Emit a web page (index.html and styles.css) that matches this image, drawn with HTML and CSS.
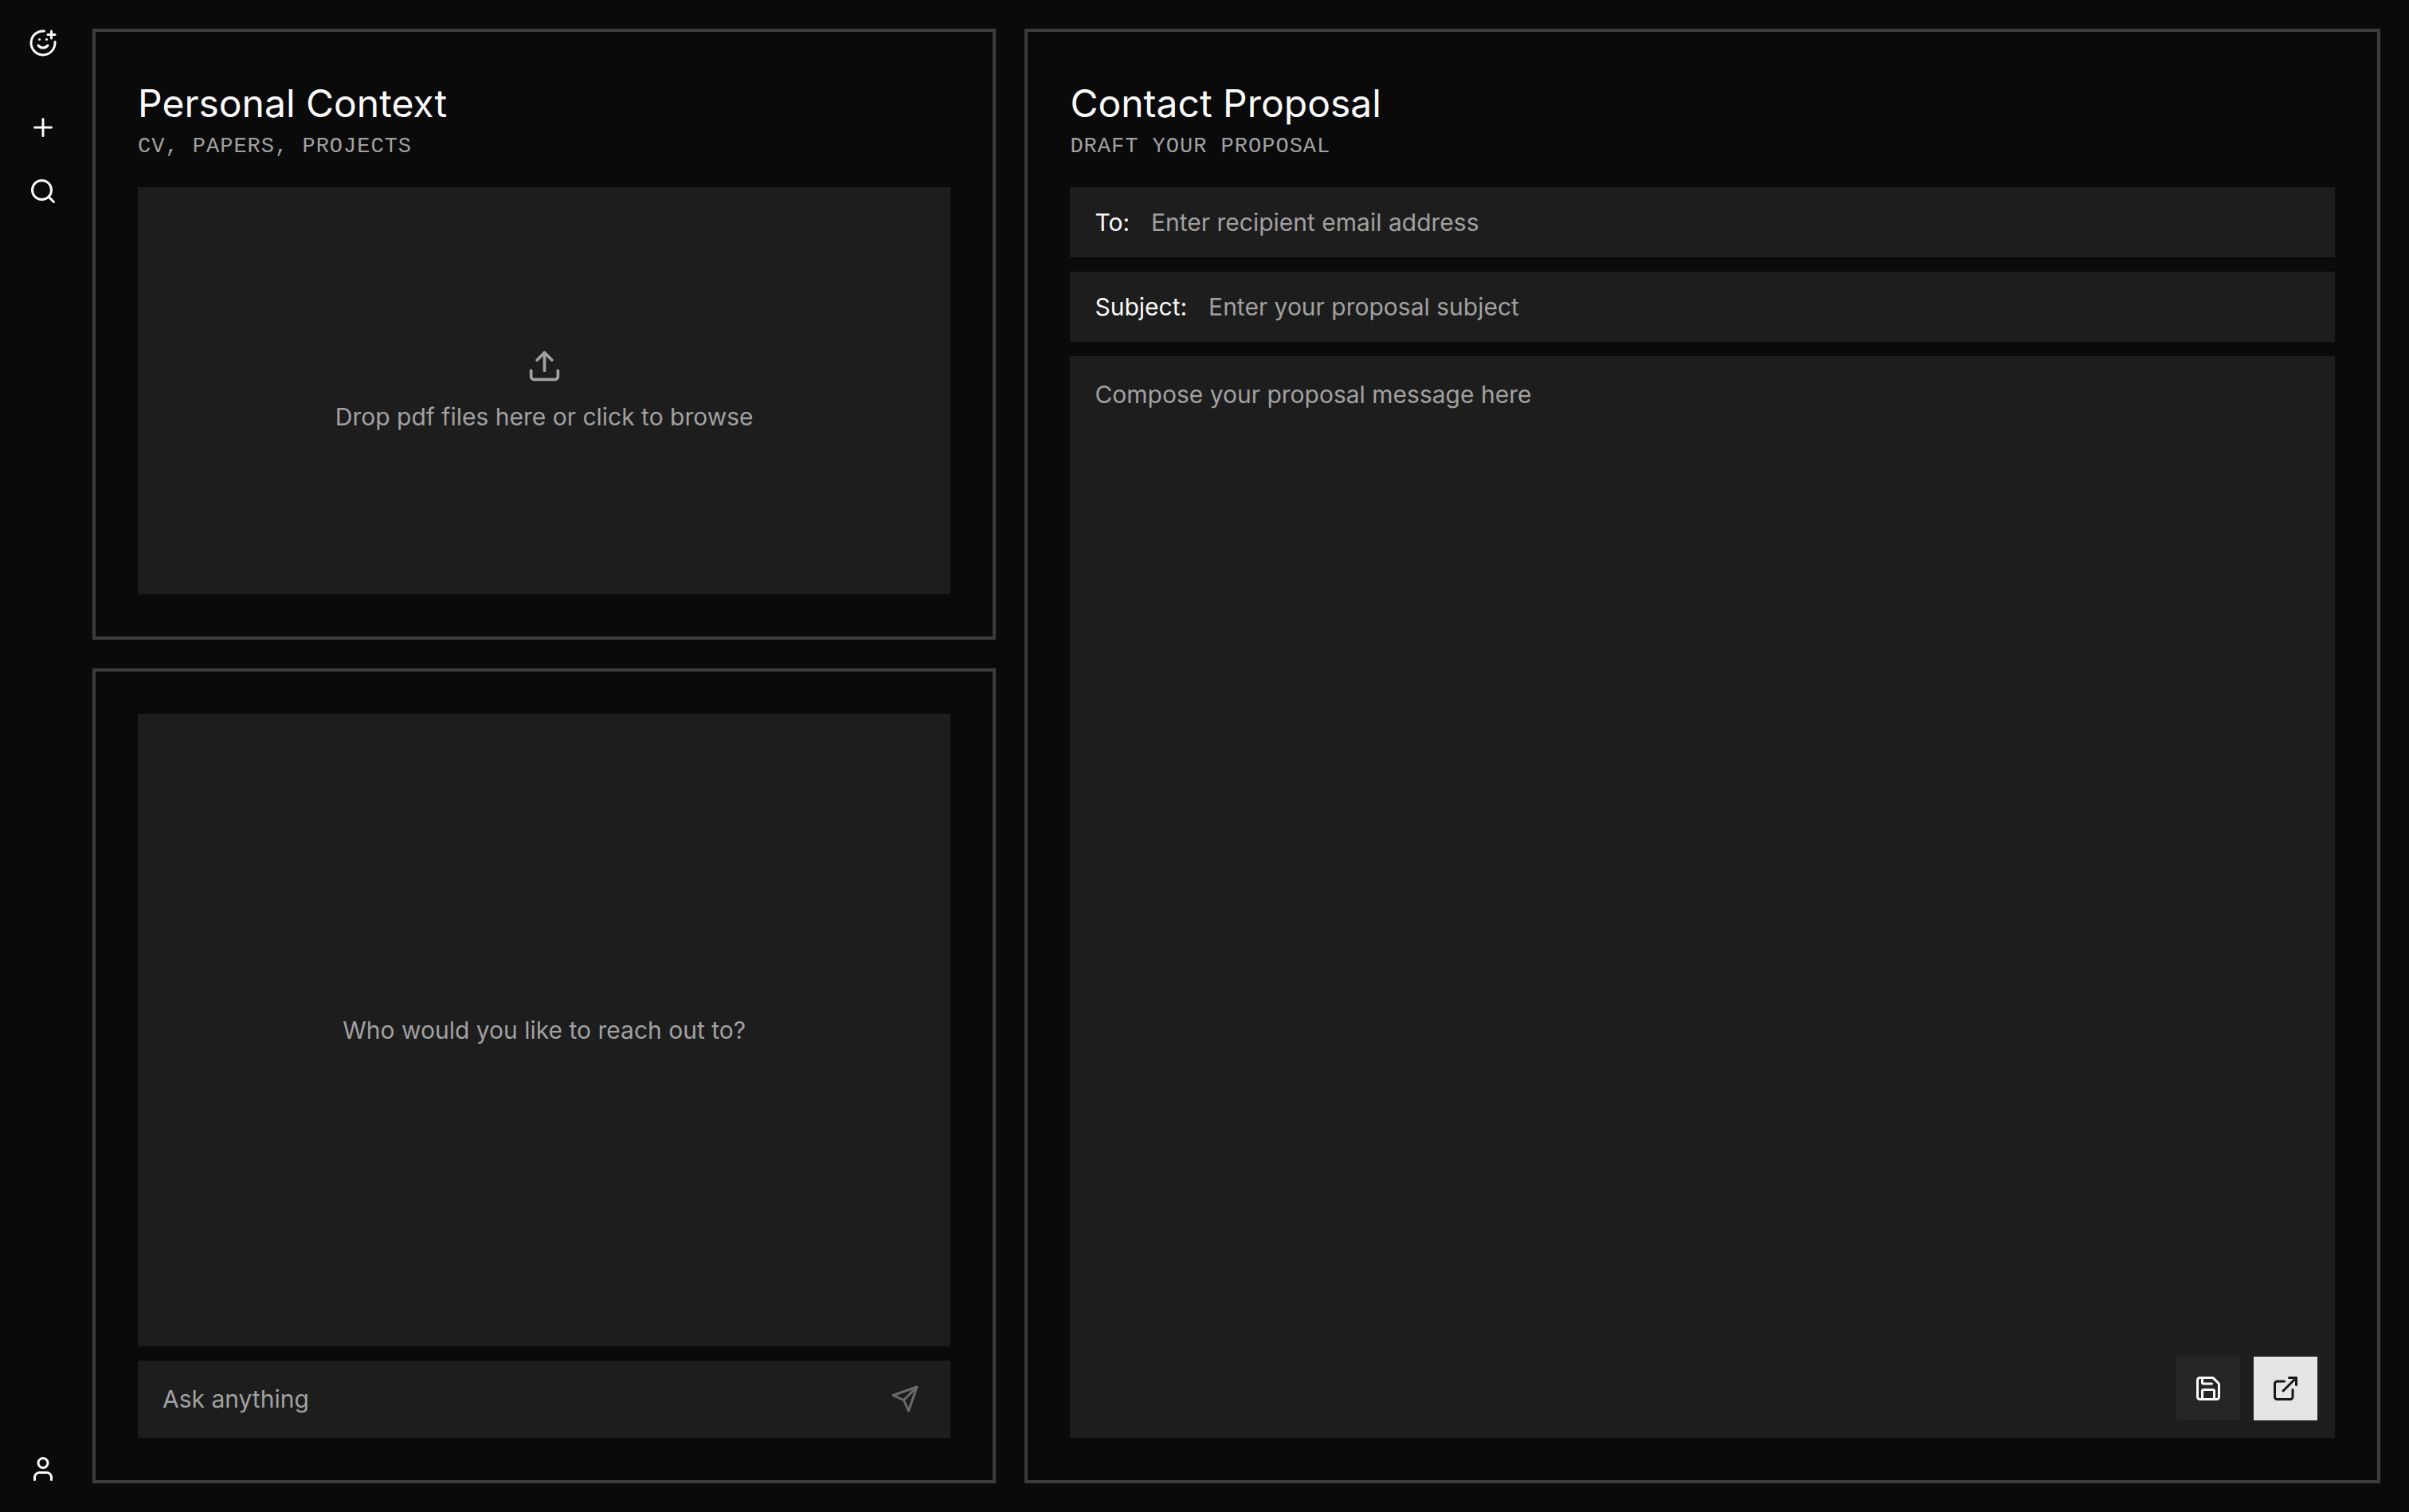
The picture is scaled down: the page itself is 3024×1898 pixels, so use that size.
FILE: index.html
```html
<!DOCTYPE html>
<html lang="en">
<head>
<meta charset="utf-8">
<meta name="viewport" content="width=device-width, initial-scale=1">
<title>Contact Proposal</title>
<link rel="stylesheet" href="styles.css">
</head>
<body>
<div class="app">
  <nav class="sidebar" aria-label="Main">
    <a class="nav-link" href="#home" aria-label="Home">
      <svg class="icon" viewBox="0 0 24 24"><path d="M22 11v1a10 10 0 1 1-9-10"/><path d="M8 14s1.5 2 4 2 4-2 4-2"/><path d="M9 9h.01"/><path d="M15 9h.01"/><path d="M16 5h6"/><path d="M19 2v6"/></svg>
    </a>
    <div class="nav-actions">
      <button class="nav-link" type="button" aria-label="New">
        <svg class="icon" viewBox="0 0 24 24"><path d="M5 12h14"/><path d="M12 5v14"/></svg>
      </button>
      <button class="nav-link" type="button" aria-label="Search">
        <svg class="icon" viewBox="0 0 24 24"><circle cx="11" cy="11" r="8"/><path d="m21 21-4.34-4.34"/></svg>
      </button>
    </div>
    <button class="nav-link nav-account" type="button" aria-label="Account">
      <svg class="icon" viewBox="0 0 24 24"><circle cx="12" cy="7" r="4"/><path d="M19 21v-2a4 4 0 0 0-4-4H9a4 4 0 0 0-4 4v2"/></svg>
    </button>
  </nav>

  <main class="workspace">
    <div class="column">
      <section class="panel panel-context">
        <header class="panel-header">
          <h2 class="panel-title">Personal Context</h2>
          <p class="panel-subtitle">CV, PAPERS, PROJECTS</p>
        </header>
        <label class="dropzone">
          <svg class="icon icon-large" viewBox="0 0 24 24"><path d="M21 15v4a2 2 0 0 1-2 2H5a2 2 0 0 1-2-2v-4"/><path d="m17 8-5-5-5 5"/><path d="M12 3v12"/></svg>
          <span>Drop pdf files here or click to browse</span>
          <input class="file-input" type="file" accept="application/pdf" multiple>
        </label>
      </section>

      <section class="panel panel-chat">
        <div class="chat-log">
          <p class="chat-empty">Who would you like to reach out to?</p>
        </div>
        <form class="chat-form">
          <input class="text-input" type="text" placeholder="Ask anything" aria-label="Ask anything">
          <button class="send-button" type="submit" aria-label="Send" disabled>
            <svg class="icon" viewBox="0 0 24 24"><path d="m22 2-7 20-4-9-9-4Z"/><path d="M22 2 11 13"/></svg>
          </button>
        </form>
      </section>
    </div>

    <section class="panel">
      <header class="panel-header">
        <h2 class="panel-title">Contact Proposal</h2>
        <p class="panel-subtitle">DRAFT YOUR PROPOSAL</p>
      </header>
      <form class="proposal-form">
        <div class="field">
          <label class="field-label" for="recipient">To:</label>
          <input class="text-input" id="recipient" type="email" placeholder="Enter recipient email address">
        </div>
        <div class="field">
          <label class="field-label" for="subject">Subject:</label>
          <input class="text-input" id="subject" type="text" placeholder="Enter your proposal subject">
        </div>
        <div class="composer">
          <textarea class="message" placeholder="Compose your proposal message here" aria-label="Message"></textarea>
          <div class="composer-actions">
            <button class="action-button" type="button" aria-label="Save draft">
              <svg class="icon" viewBox="0 0 24 24"><path d="M15.2 3a2 2 0 0 1 1.4.6l3.8 3.8a2 2 0 0 1 .6 1.4V19a2 2 0 0 1-2 2H5a2 2 0 0 1-2-2V5a2 2 0 0 1 2-2z"/><path d="M17 21v-7a1 1 0 0 0-1-1H8a1 1 0 0 0-1 1v7"/><path d="M7 3v4a1 1 0 0 0 1 1h7"/></svg>
            </button>
            <button class="action-button action-primary" type="submit" aria-label="Open in mail">
              <svg class="icon" viewBox="0 0 24 24"><path d="M15 3h6v6"/><path d="M10 14 21 3"/><path d="M18 13v6a2 2 0 0 1-2 2H5a2 2 0 0 1-2-2V8a2 2 0 0 1 2-2h6"/></svg>
            </button>
          </div>
        </div>
      </form>
    </section>
  </main>
</div>
</body>
</html>
```
FILE: styles.css
```css
:root {
  --background: #0a0a0a;
  --surface: #1d1d1d;
  --border: #3c3c3c;
  --text: #fafafa;
  --muted: #a1a1a1;
  --space: 36px;
  --gap: 18px;
}

* {
  box-sizing: border-box;
}

body {
  margin: 0;
  background: var(--background);
  color: var(--text);
  font-family: Inter, "Liberation Sans", sans-serif;
  font-size: 30px;
  line-height: 42px;
}

h2,
p {
  margin: 0;
}

button,
input,
textarea {
  margin: 0;
  padding: 0;
  border: 0;
  border-radius: 0;
  background: none;
  color: inherit;
  font: inherit;
}

::placeholder {
  color: var(--muted);
  opacity: 1;
}

.icon {
  display: block;
  width: 36px;
  height: 36px;
  fill: none;
  stroke: currentColor;
  stroke-width: 2;
  stroke-linecap: round;
  stroke-linejoin: round;
}

.icon-large {
  width: 45px;
  height: 45px;
}

.app {
  display: flex;
  height: 100vh;
  padding: var(--space) var(--space) var(--space) 0;
}

.sidebar {
  display: flex;
  flex-direction: column;
  align-items: center;
  width: 108px;
}

.nav-link {
  color: inherit;
}

.nav-actions {
  display: flex;
  flex-direction: column;
  gap: 44px;
  margin-top: 70px;
}

.nav-account {
  margin-top: auto;
}

.workspace {
  display: grid;
  flex: 1;
  grid-template-columns: 2fr 3fr;
  gap: var(--space);
  min-width: 0;
  margin-left: 8px;
}

.column {
  display: grid;
  grid-template-rows: 3fr 4fr;
  gap: var(--space);
  min-width: 0;
}

.panel {
  display: flex;
  flex-direction: column;
  min-width: 0;
  min-height: 0;
  padding: 53px;
  border: 4px solid var(--border);
}

.panel-header {
  margin-bottom: 34px;
}

.panel-title {
  font-size: 48px;
  font-weight: 400;
  line-height: 74px;
}

.panel-subtitle {
  color: var(--muted);
  font-family: "Liberation Mono", monospace;
  font-size: 27px;
  letter-spacing: 1px;
  line-height: 34px;
}

.dropzone {
  display: flex;
  flex: 1;
  flex-direction: column;
  align-items: center;
  justify-content: center;
  gap: 20px;
  background: var(--surface);
  color: var(--muted);
  cursor: pointer;
}

.file-input {
  position: absolute;
  width: 1px;
  height: 1px;
  opacity: 0;
}

.panel-chat {
  gap: var(--gap);
}

.chat-log {
  display: flex;
  flex: 1;
  align-items: center;
  justify-content: center;
  background: var(--surface);
}

.chat-empty {
  color: var(--muted);
}

.chat-form,
.field {
  display: flex;
  align-items: center;
  padding: 0 31px;
  background: var(--surface);
}

.chat-form {
  height: 97px;
}

.send-button {
  padding: 8px;
  opacity: 0.35;
}

.text-input {
  flex: 1;
  min-width: 0;
  height: 42px;
  outline: 0;
}

.proposal-form {
  display: flex;
  flex: 1;
  flex-direction: column;
  gap: var(--gap);
}

.field {
  gap: 27px;
  height: 88px;
}

.composer {
  position: relative;
  display: flex;
  flex: 1;
}

.message {
  flex: 1;
  padding: 27px 31px;
  background: var(--surface);
  outline: 0;
  resize: none;
}

.composer-actions {
  position: absolute;
  right: 22px;
  bottom: 22px;
  display: flex;
  gap: 17px;
}

.action-button {
  display: grid;
  place-items: center;
  width: 80px;
  height: 80px;
  background: #262626;
}

.action-primary {
  background: #e5e5e5;
  color: #171717;
}
```
